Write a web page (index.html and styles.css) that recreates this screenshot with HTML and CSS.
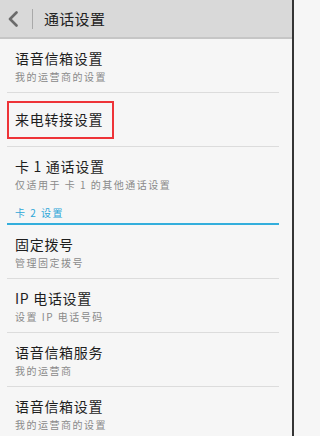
FILE: index.html
```html
<!DOCTYPE html>
<html lang="zh-CN">
<head>
<meta charset="utf-8">
<title>通话设置</title>
<link rel="stylesheet" href="styles.css">
</head>
<body>
<div class="screen">
  <header class="topbar">
    <svg class="back" width="12" height="16" viewBox="0 0 12 16" aria-hidden="true">
      <path d="M9.5 1.5 L3 8 L9.5 14.5" fill="none" stroke="#6b6b6b" stroke-width="2.6" stroke-linecap="round" stroke-linejoin="round"/>
    </svg>
    <span class="vsep"></span>
    <h1 class="title">通话设置</h1>
  </header>
  <ul class="list">
    <li class="item">
      <div class="item-title">语音信箱设置</div>
      <div class="item-sub">我的运营商的设置</div>
    </li>
    <li class="item item-single">
      <div class="highlight">
        <div class="item-title">来电转接设置</div>
      </div>
    </li>
    <li class="item item-last">
      <div class="item-title">卡 1 通话设置</div>
      <div class="item-sub">仅适用于 卡 1 的其他通话设置</div>
    </li>
    <li class="section">卡 2 设置</li>
    <li class="item">
      <div class="item-title">固定拨号</div>
      <div class="item-sub">管理固定拨号</div>
    </li>
    <li class="item">
      <div class="item-title">IP 电话设置</div>
      <div class="item-sub">设置 IP 电话号码</div>
    </li>
    <li class="item">
      <div class="item-title">语音信箱服务</div>
      <div class="item-sub">我的运营商</div>
    </li>
    <li class="item">
      <div class="item-title">语音信箱设置</div>
      <div class="item-sub">我的运营商的设置</div>
    </li>
  </ul>
</div>
</body>
</html>
```
FILE: styles.css
```css
html, body {
  margin: 0;
  padding: 0;
  background: #f6f6f6;
}
body {
  font-family: "Noto Sans CJK SC", "Noto Sans", sans-serif;
  overflow: hidden;
}
.screen {
  width: 292px;
  height: 436px;
  border-right: 2px solid #353535;
  background: #f6f6f6;
  overflow: hidden;
}
.topbar {
  height: 37px;
  background: #d9d9d9;
  border-bottom: 2px solid #c6c6c6;
  display: flex;
  align-items: center;
}
.back {
  margin-left: 7px;
  display: block;
}
.vsep {
  width: 1px;
  height: 20px;
  background: #a9a9a9;
  margin-left: 13px;
}
.title {
  margin: 0 0 0 11px;
  font-size: 15px;
  font-weight: normal;
  color: #222;
  line-height: 22px;
  letter-spacing: 0.3px;
}
.list {
  list-style: none;
  margin: 0 13px 0 7px;
  padding: 0;
}
.item {
  padding: 9px 0 8px 8px;
  border-bottom: 1px solid #dcdcdc;
}
.item-title {
  font-size: 14px;
  line-height: 21px;
  color: #1e1e1e;
  letter-spacing: 0.7px;
}
.item-sub {
  font-size: 10px;
  line-height: 15px;
  color: #8a8a8a;
  letter-spacing: 1.5px;
}
.item-single {
  padding: 8px 0 7px 0;
}
.highlight {
  width: 97px;
  height: 34px;
  border: 2px solid #ee3338;
  padding: 0 0 0 6px;
}
.highlight .item-title {
  padding-top: 6px;
}
.item-last {
  border-bottom: none;
}
.section {
  padding: 7px 0 4px 8px;
  font-size: 10px;
  line-height: 12px;
  color: #2ea6d8;
  letter-spacing: 1.5px;
  border-bottom: 2px solid #33aedc;
}
```
